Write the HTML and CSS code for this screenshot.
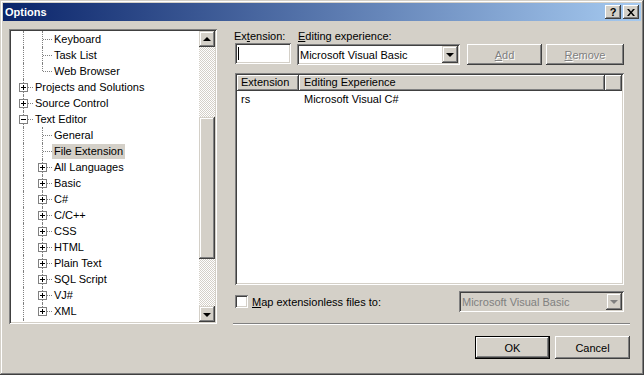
FILE: index.html
```html
<!DOCTYPE html>
<html lang="en">
<head>
    <meta charset="UTF-8">
    <title>Options</title>
    <link rel="stylesheet" href="styles.css">
</head>
<body>
    <div class="window">
        <div class="titlebar">
            <span class="title">Options</span>
            <div class="caption-buttons">
                <span class="cap-btn help">?</span>
                <span class="cap-btn close">
                    <svg width="8" height="7" viewBox="0 0 8 7"><path d="M0 0h2l2 2.5L6 0h2L5 3.5 8 7H6L4 4.5 2 7H0l3-3.5z" fill="#000"/></svg>
                </span>
            </div>
        </div>

        <div class="content">
            <div class="tree">
                <div class="tree-items">
                    <div class="node"><span class="g pipe"></span><span class="g tee"></span><span class="label">Keyboard</span></div>
                    <div class="node"><span class="g pipe"></span><span class="g tee"></span><span class="label">Task List</span></div>
                    <div class="node"><span class="g pipe"></span><span class="g ell"></span><span class="label">Web Browser</span></div>
                    <div class="node"><span class="g tee"><i class="box plus"></i></span><span class="label">Projects and Solutions</span></div>
                    <div class="node"><span class="g tee"><i class="box plus"></i></span><span class="label">Source Control</span></div>
                    <div class="node"><span class="g tee"><i class="box"></i></span><span class="label">Text Editor</span></div>
                    <div class="node"><span class="g pipe"></span><span class="g tee"></span><span class="label">General</span></div>
                    <div class="node"><span class="g pipe"></span><span class="g tee"></span><span class="label selected">File Extension</span></div>
                    <div class="node"><span class="g pipe"></span><span class="g tee"><i class="box plus"></i></span><span class="label">All Languages</span></div>
                    <div class="node"><span class="g pipe"></span><span class="g tee"><i class="box plus"></i></span><span class="label">Basic</span></div>
                    <div class="node"><span class="g pipe"></span><span class="g tee"><i class="box plus"></i></span><span class="label">C#</span></div>
                    <div class="node"><span class="g pipe"></span><span class="g tee"><i class="box plus"></i></span><span class="label">C/C++</span></div>
                    <div class="node"><span class="g pipe"></span><span class="g tee"><i class="box plus"></i></span><span class="label">CSS</span></div>
                    <div class="node"><span class="g pipe"></span><span class="g tee"><i class="box plus"></i></span><span class="label">HTML</span></div>
                    <div class="node"><span class="g pipe"></span><span class="g tee"><i class="box plus"></i></span><span class="label">Plain Text</span></div>
                    <div class="node"><span class="g pipe"></span><span class="g tee"><i class="box plus"></i></span><span class="label">SQL Script</span></div>
                    <div class="node"><span class="g pipe"></span><span class="g tee"><i class="box plus"></i></span><span class="label">VJ#</span></div>
                    <div class="node"><span class="g pipe"></span><span class="g ell"><i class="box plus"></i></span><span class="label">XML</span></div>
                    <div class="node"><span class="g pipe"></span></div>
                </div>
                <div class="vscroll">
                    <span class="sb-btn"><i class="arrow up"></i></span>
                    <div class="sb-track"><span class="sb-thumb"></span></div>
                    <span class="sb-btn"><i class="arrow down"></i></span>
                </div>
            </div>

            <div class="pane">
                <div class="labels">
                    <span class="lbl-ext">Ex<u>t</u>ension:</span>
                    <span><u>E</u>diting experience:</span>
                </div>
                <div class="fields">
                    <div class="textbox"><span class="caret"></span></div>
                    <div class="combo">
                        <span class="combo-text">Microsoft Visual Basic</span>
                        <span class="drop"><i class="arrow down"></i></span>
                    </div>
                    <span class="btn add disabled"><u>A</u>dd</span>
                    <span class="btn remove disabled"><u>R</u>emove</span>
                </div>

                <div class="listview">
                    <div class="lv-header">
                        <span class="col col-ext">Extension</span>
                        <span class="col col-exp">Editing Experience</span>
                        <span class="col col-fill"></span>
                    </div>
                    <div class="lv-row">
                        <span class="col-ext">rs</span>
                        <span class="col-exp">Microsoft Visual C#</span>
                    </div>
                </div>

                <div class="map-row">
                    <span class="checkbox"></span>
                    <span class="map-label"><u>M</u>ap extensionless files to:</span>
                    <div class="combo map-combo disabled">
                        <span class="combo-text">Microsoft Visual Basic</span>
                        <span class="drop"><i class="arrow down"></i></span>
                    </div>
                </div>

                <div class="separator"></div>

                <div class="actions">
                    <span class="btn default"><span class="btn-inner">OK</span></span>
                    <span class="btn">Cancel</span>
                </div>
            </div>
        </div>
    </div>
</body>
</html>
```

FILE: styles.css
```css
body {
    margin: 0;
    padding: 0;
    font-family: "Liberation Sans", Arial, sans-serif;
    font-size: 11px;
    color: #000;
    background-color: #d4d0c8;
}

.window {
    width: 644px;
    height: 375px;
    box-sizing: border-box;
    padding: 3px;
    background-color: #d4d0c8;
    box-shadow: inset -1px -1px #404040, inset 1px 1px #d4d0c8, inset -2px -2px #808080, inset 2px 2px #fff;
}

/* title bar */
.titlebar {
    height: 18px;
    display: flex;
    align-items: center;
    justify-content: space-between;
    padding: 0 2px;
    background: linear-gradient(to right, #0a246a, #a6caf0);
}

.title {
    color: #fff;
    font-weight: bold;
    font-size: 11px;
}

.caption-buttons {
    display: flex;
    gap: 2px;
}

.cap-btn {
    width: 16px;
    height: 14px;
    box-sizing: border-box;
    display: flex;
    align-items: center;
    justify-content: center;
    background-color: #d4d0c8;
    font-weight: bold;
    font-size: 11px;
    line-height: 14px;
    box-shadow: inset -1px -1px #404040, inset 1px 1px #fff, inset -2px -2px #808080, inset 2px 2px #d4d0c8;
}

.help {
    padding-bottom: 1px;
}

/* main area */
.content {
    display: flex;
    padding: 8px 0 0 6px;
}

.tree {
    width: 208px;
    height: 295px;
    box-sizing: border-box;
    padding: 2px;
    display: flex;
    background-color: #fff;
    box-shadow: inset 1px 1px #808080, inset -1px -1px #fff, inset 2px 2px #404040, inset -2px -2px #d4d0c8;
}

.tree-items {
    flex: 1;
    overflow: hidden;
    padding-left: 3px;
}

.node {
    display: flex;
    align-items: center;
    height: 16px;
}

.g {
    position: relative;
    flex: none;
    width: 19px;
    height: 16px;
}

.pipe::before,
.tee::before,
.ell::before {
    content: "";
    position: absolute;
    left: 9px;
    top: 0;
    bottom: 0;
    border-left: 1px dotted #808080;
}

.ell::before {
    bottom: 8px;
}

.tee::after,
.ell::after {
    content: "";
    position: absolute;
    left: 10px;
    right: 0;
    top: 8px;
    border-top: 1px dotted #808080;
}

.box {
    position: absolute;
    left: 5px;
    top: 4px;
    width: 7px;
    height: 7px;
    border: 1px solid #808080;
    background-color: #fff;
    z-index: 1;
}

.box::before {
    content: "";
    position: absolute;
    left: 1px;
    top: 3px;
    width: 5px;
    height: 1px;
    background-color: #000;
}

.box.plus::after {
    content: "";
    position: absolute;
    left: 3px;
    top: 1px;
    width: 1px;
    height: 5px;
    background-color: #000;
}

.label {
    padding: 0 2px;
    line-height: 15px;
    white-space: nowrap;
}

.label.selected {
    background-color: #d4d0c8;
}

/* scrollbar */
.vscroll {
    width: 16px;
    display: flex;
    flex-direction: column;
    background-image: conic-gradient(#fff 25%, #d4d0c8 0 50%, #fff 0 75%, #d4d0c8 0);
    background-size: 2px 2px;
}

.sb-btn,
.sb-thumb {
    display: flex;
    align-items: center;
    justify-content: center;
    height: 16px;
    background-color: #d4d0c8;
    box-shadow: inset -1px -1px #404040, inset 1px 1px #d4d0c8, inset -2px -2px #808080, inset 2px 2px #fff;
}

.sb-track {
    flex: 1;
}

.sb-thumb {
    margin-top: 70px;
    height: 142px;
}

.arrow {
    width: 0;
    height: 0;
    border-left: 4px solid transparent;
    border-right: 4px solid transparent;
}

.arrow.up {
    border-bottom: 4px solid #000;
    margin-bottom: 1px;
}

.arrow.down {
    border-top: 4px solid #000;
    margin-top: 1px;
}

/* right pane */
.pane {
    width: 389px;
    margin-left: 18px;
}

.labels {
    display: flex;
    height: 14px;
    line-height: 14px;
}

.lbl-ext {
    width: 64px;
    margin-left: -1px;
}

.fields {
    display: flex;
    align-items: flex-start;
    height: 22px;
}

.textbox {
    width: 56px;
    height: 21px;
    box-sizing: border-box;
    padding: 4px 3px;
    background-color: #fff;
    box-shadow: inset 1px 1px #808080, inset -1px -1px #fff, inset 2px 2px #404040, inset -2px -2px #d4d0c8;
}

.caret {
    display: block;
    width: 1px;
    height: 13px;
    background-color: #000;
}

.combo {
    display: flex;
    align-items: center;
    width: 163px;
    height: 21px;
    margin: 1px 0 0 6px;
    box-sizing: border-box;
    padding: 2px;
    background-color: #fff;
    box-shadow: inset 1px 1px #808080, inset -1px -1px #fff, inset 2px 2px #404040, inset -2px -2px #d4d0c8;
}

.combo-text {
    flex: 1;
    padding-left: 1px;
    white-space: nowrap;
}

.drop {
    display: flex;
    align-items: center;
    justify-content: center;
    width: 16px;
    height: 17px;
    background-color: #d4d0c8;
    box-shadow: inset -1px -1px #404040, inset 1px 1px #d4d0c8, inset -2px -2px #808080, inset 2px 2px #fff;
}

.btn {
    display: flex;
    align-items: center;
    justify-content: center;
    width: 75px;
    height: 23px;
    box-sizing: border-box;
    background-color: #d4d0c8;
    box-shadow: inset -1px -1px #404040, inset 1px 1px #fff, inset -2px -2px #808080, inset 2px 2px #d4d0c8;
}

.btn.disabled {
    color: #808080;
    text-shadow: 1px 1px #fff;
}

.add {
    height: 21px;
    margin: 1px 0 0 7px;
}

.remove {
    width: 78px;
    height: 21px;
    margin: 1px 0 0 4px;
}

.listview {
    width: 389px;
    height: 212px;
    box-sizing: border-box;
    margin-top: 8px;
    padding: 2px;
    background-color: #fff;
    box-shadow: inset 1px 1px #808080, inset -1px -1px #fff, inset 2px 2px #404040, inset -2px -2px #d4d0c8;
}

.lv-header {
    display: flex;
    height: 16px;
}

.col {
    box-sizing: border-box;
    height: 16px;
    line-height: 15px;
    background-color: #d4d0c8;
    box-shadow: inset -1px -1px #404040, inset 1px 1px #fff, inset -2px -2px #808080;
}

.col-ext {
    width: 62px;
    padding-left: 4px;
    box-sizing: border-box;
}

.col-exp {
    width: 306px;
    padding-left: 5px;
    box-sizing: border-box;
}

.col-fill {
    flex: 1;
}

.lv-row {
    display: flex;
    height: 14px;
    line-height: 14px;
    margin-top: 1px;
}

.map-row {
    display: flex;
    align-items: center;
    margin-top: 6px;
    height: 21px;
}

.checkbox {
    width: 13px;
    height: 13px;
    box-sizing: border-box;
    background-color: #fff;
    box-shadow: inset 1px 1px #808080, inset -1px -1px #fff, inset 2px 2px #404040, inset -2px -2px #d4d0c8;
}

.map-label {
    margin-left: 4px;
}

.map-combo {
    width: 165px;
    margin: 0 0 0 auto;
}

.combo.disabled {
    background-color: #d4d0c8;
    color: #808080;
}

.combo.disabled .arrow.down {
    border-top-color: #808080;
}

.separator {
    margin: 11px -6px 0 -2px;
    height: 1px;
    border-top: 1px solid #808080;
    border-bottom: 1px solid #fff;
    height: 0;
}

.actions {
    display: flex;
    justify-content: flex-end;
    gap: 5px;
    margin: 11px -6px 0 0;
}

.btn.default {
    border: 1px solid #000;
    box-shadow: inset -1px -1px #404040, inset 1px 1px #fff, inset -2px -2px #808080, inset 2px 2px #d4d0c8;
}
```
